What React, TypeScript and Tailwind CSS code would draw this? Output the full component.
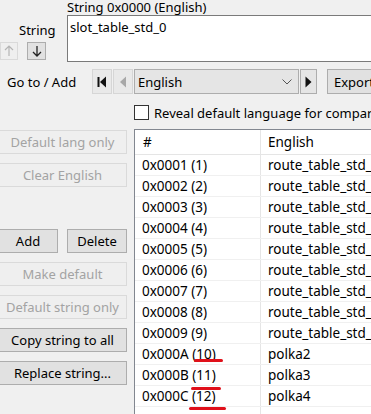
const rows = [
  ["0x0001 (1)", "route_table_std_1"],
  ["0x0002 (2)", "route_table_std_2"],
  ["0x0003 (3)", "route_table_std_3"],
  ["0x0004 (4)", "route_table_std_4"],
  ["0x0005 (5)", "route_table_std_5"],
  ["0x0006 (6)", "route_table_std_6"],
  ["0x0007 (7)", "route_table_std_7"],
  ["0x0008 (8)", "route_table_std_8"],
  ["0x0009 (9)", "route_table_std_9"],
  ["0x000A (10)", "polka2"],
  ["0x000B (11)", "polka3"],
  ["0x000C (12)", "polka4"],
]

function SideButton({ label, disabled, className = "" }: { label: string; disabled?: boolean; className?: string }) {
  return (
    <div
      className={
        "h-[24px] flex items-center justify-center border whitespace-nowrap " +
        (disabled ? "border-[#dadada] bg-[#efefef] text-[#a3a3a3] " : "border-[#adadad] bg-[#e1e1e1] text-black ") +
        className
      }
    >
      {label}
    </div>
  )
}

export default function App() {
  return (
    <div className="w-[371px] h-[414px] overflow-hidden bg-[#f0f0f0] text-[13px] text-black font-['Noto_Sans',sans-serif] leading-[16px]">
      {/* top: string editor */}
      <div className="flex h-[62px]">
        <div className="w-[67px] shrink-0 flex flex-col">
          <div className="pt-[22px] pl-[19px]">String</div>
          <div className="flex gap-[9px] mt-[4px]">
            <div className="w-[18px] h-[18px] border border-[#dadada] bg-[#efefef] flex items-center justify-center">
              <svg width="10" height="12" viewBox="0 0 10 12" fill="none" stroke="#b5b5b5" strokeWidth="1.2">
                <path d="M5 1v10M1 5l4-4 4 4" />
              </svg>
            </div>
            <div className="w-[19px] h-[18px] border border-[#adadad] bg-[#e1e1e1] flex items-center justify-center">
              <svg width="10" height="12" viewBox="0 0 10 12" fill="none" stroke="#222" strokeWidth="1.3">
                <path d="M5 1v10M1 7l4 4 4-4" />
              </svg>
            </div>
          </div>
        </div>
        <div className="flex flex-col">
          <div className="h-[15px] leading-[14px] whitespace-nowrap">String 0x0000 (English)</div>
          <div className="w-[330px] h-[47px] border border-[#7a7a7a] bg-white pl-[2px] pt-[3px]">slot_table_std_0</div>
        </div>
      </div>

      {/* navigation row */}
      <div className="flex items-center h-[25px] mt-[7px]">
        <div className="w-[92px] shrink-0 pl-[7px] whitespace-nowrap">Go to / Add</div>
        <div className="w-[20px] h-[25px] shrink-0 border border-[#d6d6d6] bg-[#e9e9e9] flex items-center justify-center">
          <svg width="10" height="12" viewBox="0 0 10 12">
            <rect x="0.5" y="1" width="2" height="10" fill="#111" />
            <path d="M9 0.5v11L3 6z" fill="#111" />
          </svg>
        </div>
        <div className="w-[20px] h-[25px] shrink-0 ml-[1px] border border-[#d6d6d6] bg-[#e9e9e9] flex items-center justify-center">
          <svg width="8" height="12" viewBox="0 0 8 12">
            <path d="M7 0.5v11L1 6z" fill="#a8a8a8" />
          </svg>
        </div>
        <div className="w-[165px] h-[25px] shrink-0 ml-[1px] border border-[#adadad] bg-[#e5e5e5] flex items-center justify-between pl-[3px] pr-[6px]">
          <span>English</span>
          <svg width="10" height="6" viewBox="0 0 10 6" fill="none" stroke="#555" strokeWidth="1">
            <path d="M0.5 0.5l4.5 4.5 4.5-4.5" />
          </svg>
        </div>
        <div className="w-[17px] h-[25px] shrink-0 ml-[1px] border border-[#adadad] bg-[#e5e5e5] flex items-center justify-center">
          <svg width="7" height="12" viewBox="0 0 7 12">
            <path d="M0.5 0.5v11L6.5 6z" fill="#111" />
          </svg>
        </div>
        <div className="w-[60px] h-[25px] ml-[10px] shrink-0 border border-[#adadad] bg-[#e1e1e1] flex items-center pl-[6px]">Export</div>
      </div>

      {/* checkbox */}
      <div className="flex items-center h-[15px] mt-[11px] pl-[134px]">
        <div className="w-[15px] h-[15px] border border-[#333] bg-white shrink-0" />
        <span className="ml-[5px] whitespace-nowrap">Reveal default language for comparison</span>
      </div>

      {/* main area */}
      <div className="flex mt-[9px]">
        <div className="w-[136px] shrink-0 pt-[1px] -ml-[2px]">
          <div className="w-[129px] flex flex-col gap-[9px]">
            <SideButton label="Default lang only" disabled />
            <SideButton label="Clear English" disabled />
            <div className="h-[24px]" />
            <div className="flex gap-[9px]">
              <SideButton label="Add" className="w-[60px]" />
              <SideButton label="Delete" className="w-[60px]" />
            </div>
            <SideButton label="Make default" disabled />
            <SideButton label="Default string only" disabled />
            <SideButton label="Copy string to all" />
            <SideButton label="Replace string..." />
          </div>
        </div>
        <div className="relative flex-1 min-w-0 border-l border-t border-[#828790] bg-white h-[300px] text-[13.5px]">
          <div className="flex h-[25px] border-b border-[#e5e5e5]">
            <div className="w-[126px] shrink-0 border-r border-[#e5e5e5] pl-[8px] flex items-center">#</div>
            <div className="pl-[7px] flex items-center">English</div>
          </div>
          {rows.map(([id, text]) => (
            <div key={id} className="flex h-[21px] border-b border-[#f0f0f0]">
              <div className="w-[126px] shrink-0 border-r border-[#e5e5e5] pl-[7px] flex items-center whitespace-nowrap">{id}</div>
              <div className="pl-[7px] flex items-center whitespace-nowrap">{text}</div>
            </div>
          ))}
          <div className="flex h-[30px]">
            <div className="w-[126px] shrink-0 border-r border-[#e5e5e5]" />
          </div>
          {/* red marks */}
          <div className="absolute left-[59px] top-[229px] w-[29px] h-[3px] rounded-full bg-[#e0101a]" />
          <div className="absolute left-[56px] top-[257px] w-[30px] h-[3px] rounded-full bg-[#e0101a]" />
          <div className="absolute left-[54px] top-[277px] w-[37px] h-[3px] rounded-full bg-[#e0101a]" />
        </div>
      </div>
    </div>
  )
}
